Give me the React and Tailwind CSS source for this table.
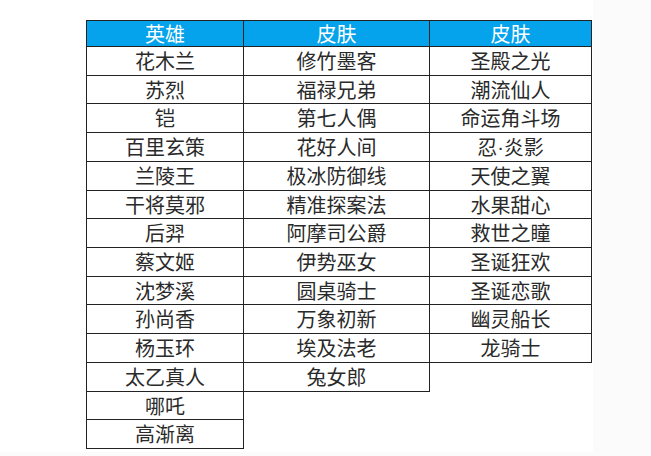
import React from 'react';

const heroes = ['花木兰', '苏烈', '铠', '百里玄策', '兰陵王', '干将莫邪', '后羿', '蔡文姬', '沈梦溪', '孙尚香', '杨玉环', '太乙真人', '哪吒', '高渐离'];
const skinsA = ['修竹墨客', '福禄兄弟', '第七人偶', '花好人间', '极冰防御线', '精准探案法', '阿摩司公爵', '伊势巫女', '圆桌骑士', '万象初新', '埃及法老', '兔女郎'];
const skinsB = ['圣殿之光', '潮流仙人', '命运角斗场', '忍·炎影', '天使之翼', '水果甜心', '救世之瞳', '圣诞狂欢', '圣诞恋歌', '幽灵船长', '龙骑士'];

// row heights so the lines land on the same pixels as the sheet
const heights = [29, 28, 29, 29, 29, 28, 29, 29, 28, 29, 29, 29, 28, 29];

function Label({ text }) {
    // the middle dot is narrow in the sheet, so take it from a latin font
    if (!text.includes('·')) return text;
    const [a, b] = text.split('·');
    return (
        <>
            {a}
            <span style={{ fontFamily: '"Liberation Sans", sans-serif' }}>·</span>
            {b}
        </>
    );
}

function Column({ title, items, className }) {
    return (
        <div className={`flex flex-col ${className}`}>
            <div className="h-[27px] border-t border-b border-[#222] bg-[#05a3ec] text-white flex items-center justify-center text-[20px] leading-none">
                {title}
            </div>
            {items.map((name, i) => (
                <div
                    key={name}
                    className={`${heights[i] === 29 ? 'h-[29px]' : 'h-[28px]'} border-b border-[#222] flex items-center justify-center text-[20px] leading-none text-[#2a2a2a]`}
                >
                    <Label text={name} />
                </div>
            ))}
        </div>
    );
}

export default function App() {
    return (
        <div
            className="w-[651px] h-[456px] flex flex-col bg-[#fbfbfb] overflow-hidden"
            style={{ fontFamily: '"Microsoft YaHei", "Noto Sans CJK SC", "Noto Sans", sans-serif' }}
        >
            <div className="h-[452px] w-[593px] bg-white pl-[86px] pt-[20px] flex items-start">
                <Column title="英雄" items={heroes} className="w-[158px] border-l border-r border-[#222]" />
                <Column title="皮肤" items={skinsA} className="w-[186px] border-r border-[#222]" />
                <Column title="皮肤" items={skinsB} className="w-[162px] border-r border-[#222]" />
            </div>
        </div>
    );
}
